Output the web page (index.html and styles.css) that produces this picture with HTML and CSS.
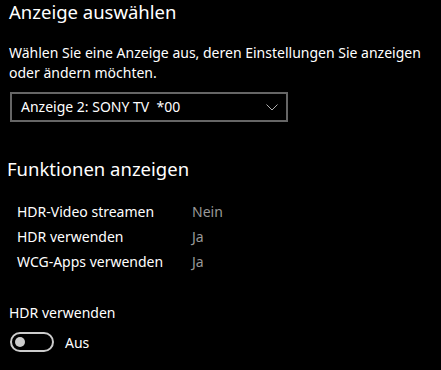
FILE: index.html
```html
<!DOCTYPE html>
<html lang="de">
<head>
    <meta charset="UTF-8">
    <meta name="viewport" content="width=device-width, initial-scale=1.0">
    <title>Anzeige</title>
    <link rel="stylesheet" href="styles.css">
</head>

<body>
    <div class="page">
        <h1 class="title">Anzeige auswählen</h1>
        <p class="desc">Wählen Sie eine Anzeige aus, deren Einstellungen Sie anzeigen oder ändern möchten.</p>

        <!-- Auswahl der Anzeige -->
        <div class="select">
            <span>Anzeige 2: SONY TV&nbsp; *00</span>
            <svg class="chevron" width="12" height="7" viewBox="0 0 12 7">
                <path d="M0.5 0.5 L6 6 L11.5 0.5" fill="none" stroke="#b0b0b0" stroke-width="1"/>
            </svg>
        </div>

        <h2 class="section-title">Funktionen anzeigen</h2>
        <div class="features">
            <div class="feature">
                <span>HDR-Video streamen</span>
                <span class="value">Nein</span>
            </div>
            <div class="feature">
                <span>HDR verwenden</span>
                <span class="value">Ja</span>
            </div>
            <div class="feature">
                <span>WCG-Apps verwenden</span>
                <span class="value">Ja</span>
            </div>
        </div>

        <!-- Schalter -->
        <div class="toggle-label">HDR verwenden</div>
        <div class="toggle-row">
            <div class="toggle"><div class="knob"></div></div>
            <span>Aus</span>
        </div>
    </div>
</body>
</html>
```

FILE: styles.css
```css
body {
    margin: 0;
    padding: 0;
    background-color: #000;
    color: #fff;
    font-family: "Noto Sans", sans-serif;
    font-size: 14px;
}

.page {
    padding: 0 9px;
}

.title {
    margin: 0;
    font-size: 18.5px;
    font-weight: normal;
    line-height: 24px;
}

.desc {
    margin: 19px 0 0;
    line-height: 20px;
}

.select {
    margin-top: 9px;
    width: 265px;
    height: 26px;
    padding-left: 9px;
    border: 2px solid #666;
    display: flex;
    align-items: center;
    line-height: 26px;
    margin-left: 1px;
}

.select span {
    flex: 1;
}

.chevron {
    margin-right: 8px;
    margin-top: 1px;
}

.section-title {
    margin: 35px 0 0 -2px;
    font-size: 18.5px;
    font-weight: normal;
    line-height: 24px;
}

.features {
    margin-top: 18px;
    padding-left: 8px;
}

.feature {
    display: grid;
    grid-template-columns: 175px 1fr;
    line-height: 25px;
}

.value {
    color: #999;
}

.toggle-label {
    margin-top: 29px;
    line-height: 20px;
}

.toggle-row {
    margin-top: 9px;
    display: flex;
    align-items: center;
    gap: 11px;
}

.toggle {
    box-sizing: border-box;
    width: 44px;
    height: 20px;
    border: 2px solid #ccc;
    border-radius: 10px;
    display: flex;
    align-items: center;
    padding-left: 3px;
    margin-left: 1px;
}

.knob {
    width: 10px;
    height: 10px;
    border-radius: 50%;
    background-color: #ccc;
}
```
